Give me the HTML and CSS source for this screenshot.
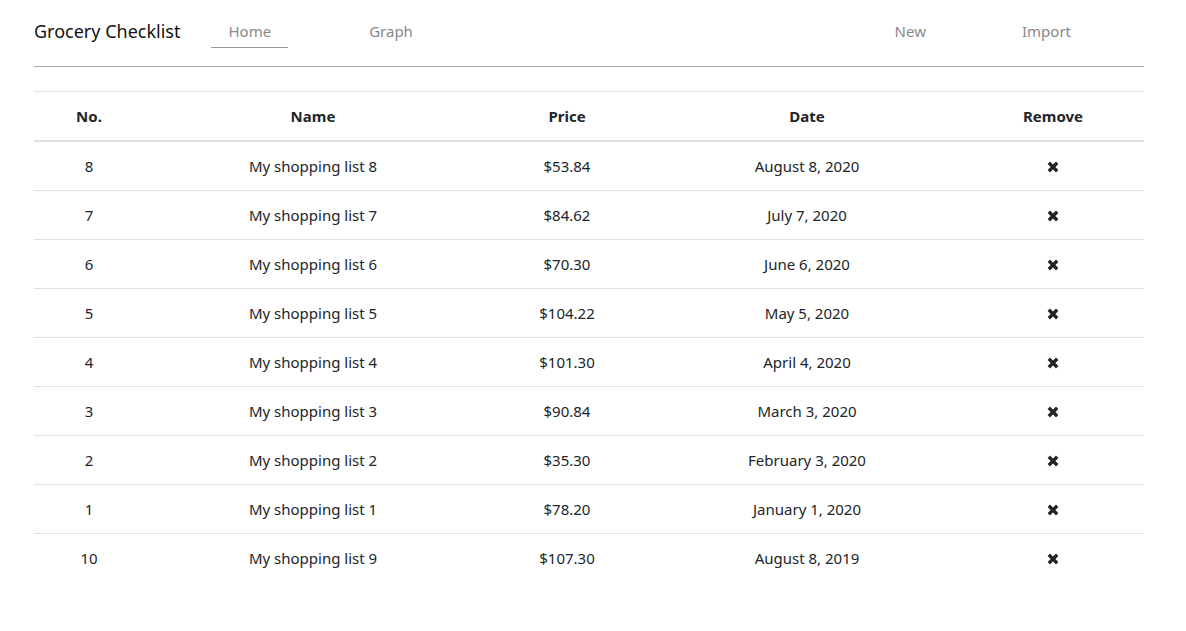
FILE: index.html
```html
<!DOCTYPE html>
<html lang="en">
<head>
<meta charset="utf-8">
<title>Grocery Checklist</title>
<link rel="stylesheet" href="styles.css">
</head>
<body>
<div class="container">
  <nav class="navbar">
    <span class="brand">Grocery Checklist</span>
    <div class="nav-left">
      <a class="nav-link active">Home</a>
      <a class="nav-link">Graph</a>
    </div>
    <div class="nav-right">
      <a class="nav-link">New</a>
      <a class="nav-link">Import</a>
    </div>
  </nav>
  <hr class="divider">
  <table class="table">
    <colgroup>
      <col class="c-no"><col class="c-name"><col class="c-price"><col class="c-date"><col class="c-remove">
    </colgroup>
    <thead>
      <tr><th>No.</th><th>Name</th><th>Price</th><th>Date</th><th>Remove</th></tr>
    </thead>
    <tbody>
      <tr><td>8</td><td>My shopping list 8</td><td>$53.84</td><td>August 8, 2020</td><td><svg class="x" viewBox="0 0 10 10"><path d="M1.5 1.5L8.5 8.5M8.5 1.5L1.5 8.5"/></svg></td></tr>
      <tr><td>7</td><td>My shopping list 7</td><td>$84.62</td><td>July 7, 2020</td><td><svg class="x" viewBox="0 0 10 10"><path d="M1.5 1.5L8.5 8.5M8.5 1.5L1.5 8.5"/></svg></td></tr>
      <tr><td>6</td><td>My shopping list 6</td><td>$70.30</td><td>June 6, 2020</td><td><svg class="x" viewBox="0 0 10 10"><path d="M1.5 1.5L8.5 8.5M8.5 1.5L1.5 8.5"/></svg></td></tr>
      <tr><td>5</td><td>My shopping list 5</td><td>$104.22</td><td>May 5, 2020</td><td><svg class="x" viewBox="0 0 10 10"><path d="M1.5 1.5L8.5 8.5M8.5 1.5L1.5 8.5"/></svg></td></tr>
      <tr><td>4</td><td>My shopping list 4</td><td>$101.30</td><td>April 4, 2020</td><td><svg class="x" viewBox="0 0 10 10"><path d="M1.5 1.5L8.5 8.5M8.5 1.5L1.5 8.5"/></svg></td></tr>
      <tr><td>3</td><td>My shopping list 3</td><td>$90.84</td><td>March 3, 2020</td><td><svg class="x" viewBox="0 0 10 10"><path d="M1.5 1.5L8.5 8.5M8.5 1.5L1.5 8.5"/></svg></td></tr>
      <tr><td>2</td><td>My shopping list 2</td><td>$35.30</td><td>February 3, 2020</td><td><svg class="x" viewBox="0 0 10 10"><path d="M1.5 1.5L8.5 8.5M8.5 1.5L1.5 8.5"/></svg></td></tr>
      <tr><td>1</td><td>My shopping list 1</td><td>$78.20</td><td>January 1, 2020</td><td><svg class="x" viewBox="0 0 10 10"><path d="M1.5 1.5L8.5 8.5M8.5 1.5L1.5 8.5"/></svg></td></tr>
      <tr><td>10</td><td>My shopping list 9</td><td>$107.30</td><td>August 8, 2019</td><td><svg class="x" viewBox="0 0 10 10"><path d="M1.5 1.5L8.5 8.5M8.5 1.5L1.5 8.5"/></svg></td></tr>
    </tbody>
  </table>
</div>
</body>
</html>
```
FILE: styles.css
```css
* { box-sizing: border-box; }
html, body { margin: 0; padding: 0; background: #fff; }
body {
  font-family: "Noto Sans", "Open Sans", sans-serif;
  font-size: 15px;
  line-height: 24px;
  color: #212529;
}
.container {
  width: 1110px;
  margin: 0 0 0 34px;
}
.navbar {
  display: flex;
  align-items: center;
  height: 66px;
  padding-bottom: 5px;
}
.brand {
  font-size: 18px;
  color: #111;
  line-height: 30px;
}
.nav-left, .nav-right {
  display: flex;
  gap: 64px;
}
.nav-left { margin-left: 31px; }
.nav-right { margin-left: auto; margin-right: 56px; gap: 62px; }
.nav-link {
  color: #888;
  font-size: 15px;
  padding: 6px 17px 4px;
  border-bottom: 1px solid transparent;
  text-decoration: none;
}
.nav-link.active { border-bottom-color: #999; }
.divider {
  margin: 0 0 24px;
  border: 0;
  border-top: 1px solid #aaa;
}
.table {
  width: 100%;
  border-collapse: collapse;
  table-layout: fixed;
}
.c-no { width: 110px; }
.c-name { width: 338px; }
.c-price { width: 170px; }
.c-date { width: 310px; }
.c-remove { width: 182px; }
.table th, .table td {
  padding: 12px;
  text-align: center;
  border-top: 1px solid #dee2e6;
  vertical-align: middle;
}
.table th {
  font-weight: 700;
  border-bottom: 2px solid #dee2e6;
}
.table thead + tbody tr:first-child td { border-top: 0; }
.x {
  width: 12px;
  height: 12px;
  display: inline-block;
  vertical-align: -1px;
}
.x path {
  stroke: #212529;
  stroke-width: 2.8;
  fill: none;
}
```
